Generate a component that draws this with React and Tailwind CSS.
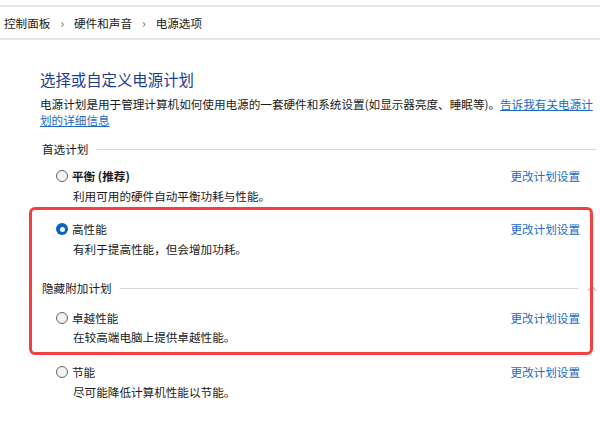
import React from "react";

function Radio({ checked }) {
  if (checked) {
    return (
      <span className="w-[12px] h-[12px] rounded-full bg-[#0a64c2] flex items-center justify-center shrink-0">
        <span className="w-[5px] h-[5px] rounded-full bg-white" />
      </span>
    );
  }
  return <span className="w-[12px] h-[12px] rounded-full border border-[#666666] bg-[#f3f3f3] shrink-0" />;
}

function Plan({ name, desc, checked, bold, mt, descMt }) {
  return (
    <div className={mt}>
      <div className="flex items-center justify-between pl-[16px] pr-[17px] h-[16px]">
        <div className="flex items-center gap-[4px]">
          <Radio checked={checked} />
          <span className={bold ? "font-bold text-[#1a1a1a]" : "text-[#1a1a1a]"}>{name}</span>
        </div>
        <span className="text-[#1c6bc4]">更改计划设置</span>
      </div>
      <div className={`${descMt} pl-[33px] h-[16px] flex items-center text-[#1a1a1a]`}>{desc}</div>
    </div>
  );
}

function GroupHeader({ label, mt, chevron }) {
  return (
    <div className={`${mt} flex items-center h-[16px] pl-[2px]`}>
      <span className="text-[#1a1a1a]">{label}</span>
      <div className={`flex-1 h-[1px] bg-[#d6d6d6] ml-[8px] ${chevron ? "" : "mr-[1px]"}`} />
      {chevron && (
        <svg className="ml-[9px]" width="10" height="6" viewBox="0 0 10 6" fill="none">
          <path d="M1 5.5 L5 1.5 L9 5.5" stroke="#8a8a8a" strokeWidth="1" />
        </svg>
      )}
    </div>
  );
}

export default function App() {
  return (
    <div className="w-[600px] h-[447px] bg-white relative overflow-hidden font-['Noto_Sans_CJK_SC',sans-serif] text-[11.6px] leading-[16px]">
      <div className="mt-[5px] h-[35px] border-y-2 border-[#e6e6e6] flex items-center pl-[4px] text-[#1a1a1a]">
        <span>控制面板</span>
        <span className="mx-[10px] text-[#666] text-[12px]">›</span>
        <span>硬件和声音</span>
        <span className="mx-[10px] text-[#666] text-[12px]">›</span>
        <span>电源选项</span>
      </div>
      <div className="pl-[40px] pr-[3px]">
        <div className="mt-[29px] text-[15.4px] leading-[20px] text-[#203c91]">选择或自定义电源计划</div>
        <div className="mt-[7px] text-[#1a1a1a]">
          <div className="whitespace-nowrap">
            电源计划是用于管理计算机如何使用电源的一套硬件和系统设置(如显示器亮度、睡眠等)。
            <span className="text-[#1c6bc4] underline">告诉我有关电源计</span>
          </div>
          <div>
            <span className="text-[#1c6bc4] underline">划的详细信息</span>
          </div>
        </div>
        <GroupHeader label="首选计划" mt="mt-[13px]" />
        <Plan name="平衡 (推荐)" bold desc="利用可用的硬件自动平衡功耗与性能。" mt="mt-[11px]" descMt="mt-[4px]" />
        <Plan name="高性能" checked desc="有利于提高性能，但会增加功耗。" mt="mt-[17px]" descMt="mt-[4px]" />
        <GroupHeader label="隐藏附加计划" mt="mt-[23px]" chevron />
        <Plan name="卓越性能" desc="在较高端电脑上提供卓越性能。" mt="mt-[14px]" descMt="mt-[3px]" />
        <Plan name="节能" desc="尽可能降低计算机性能以节能。" mt="mt-[19px]" descMt="mt-[4px]" />
      </div>
      <div className="absolute left-[29px] top-[207px] w-[564px] h-[148px] border-[3px] border-[#f04040] rounded-[6px] pointer-events-none" />
    </div>
  );
}
